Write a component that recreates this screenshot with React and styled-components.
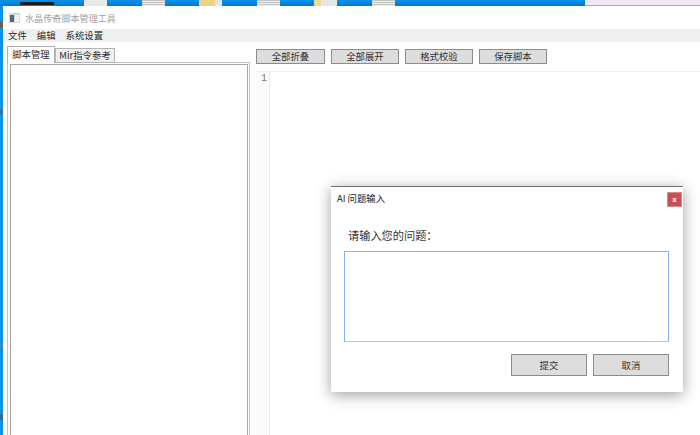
import styled, { createGlobalStyle } from 'styled-components';

const FONT = '"Noto Sans CJK SC", "Noto Sans", sans-serif';

const GlobalStyle = createGlobalStyle`
	html,
	body {
		margin: 0;
		padding: 0;
	}

	body {
		font-family: ${FONT};
	}
`;

const Screen = styled.div`
	position: relative;
	display: flex;
	flex-direction: column;
	width: 700px;
	height: 435px;
	overflow: hidden;
	background: #0a8ae0;
`;

const TaskStrip = styled.div`
	display: flex;
	flex: 0 0 6px;
	height: 6px;
	padding-left: 20px;
	gap: 30px;
	background: linear-gradient(#0a93e6, #0078d0);
`;

const BlackBar = styled.div`
	width: 34px;
	height: 3px;
	margin-top: 2px;
	background: #1c1c1c;
`;

const TileGroup = styled.div`
	display: flex;
	gap: 34.6px;
`;

const Tile = styled.div`
	width: 23px;
	height: 6px;
	background: ${({ $kind }) =>
		$kind === 'folder'
			? 'linear-gradient(90deg, #ecd27e 70%, #dfe6ee 70%)'
			: $kind === 'half'
				? 'linear-gradient(90deg, #f1d98f 30%, #e6e6e6 30%)'
				: $kind === 'lined'
					? 'repeating-linear-gradient(#c4c4c4 0, #c4c4c4 1px, #ececec 1px, #ececec 2px)'
					: '#e8e8e8'};
`;

const PinkCorner = styled.div`
	width: 115px;
	height: 5px;
	margin-left: auto;
	border-bottom: 1px solid #b0a8b0;
	background: #f3e8f2;
`;

const Body = styled.div`
	display: flex;
	flex: 1;
	min-height: 0;
`;

const DesktopEdge = styled.div`
	flex: 0 0 3px;
	background: linear-gradient(
		#0a93e8 16px,
		#7a5a50 16px,
		#7a5a50 22px,
		#0a93e8 22px,
		#0a93e8 104px,
		#4a6a80 104px,
		#4a6a80 108px,
		#0a93e8 108px,
		#0a93e8 338px,
		#4a88b0 338px,
		#4a88b0 341px,
		#0a93e8 341px,
		#0a93e8 408px,
		#3a6a88 408px,
		#3a6a88 414px,
		#0a93e8 414px
	);
`;

const Window = styled.div`
	display: flex;
	flex: 1;
	flex-direction: column;
	min-width: 0;
	background: #fff;
`;

const TitleBar = styled.div`
	display: flex;
	flex: 0 0 23px;
	align-items: center;
	gap: 5px;
	padding-left: 6px;
`;

const TitleText = styled.span`
	color: #a2a2a2;
	font-size: 9.1px;
	line-height: 12px;
`;

const MenuBar = styled.div`
	display: flex;
	flex: 0 0 13px;
	align-items: center;
	gap: 10px;
	padding-left: 5px;
	background: #f0f0f0;
`;

const MenuItem = styled.span`
	color: #2a2a2a;
	font-size: 9.4px;
	line-height: 13px;
`;

const Content = styled.div`
	display: flex;
	flex: 1;
	min-height: 0;
`;

const LeftPane = styled.div`
	display: flex;
	flex: 0 0 247px;
	flex-direction: column;
	box-sizing: border-box;
	padding: 4px 0 0 4px;
`;

const TabRow = styled.div`
	display: flex;
	align-items: flex-end;
	height: 17px;
	margin-bottom: -1px;
`;

const Tab = styled.div`
	position: relative;
	z-index: ${({ $active }) => ($active ? 1 : 0)};
	box-sizing: border-box;
	height: ${({ $active }) => ($active ? 17 : 15)}px;
	width: ${({ $width }) => $width}px;
	padding-top: ${({ $active }) => ($active ? 1 : 0)}px;
	border: 1px solid #b4b4b4;
	border-bottom: ${({ $active }) => ($active ? 0 : '1px solid #b4b4b4')};
	background: ${({ $active }) => ($active ? '#fff' : '#f0f0f0')};
	color: #2a2a2a;
	font-size: 9.4px;
	line-height: 13px;
	text-align: center;
`;

const TabPanel = styled.div`
	flex: 1;
	display: flex;
	box-sizing: border-box;
	border: 1px solid #c4c4c4;
	border-bottom: 0;
	padding: 1px 1px 0 2px;
`;

const ListBox = styled.div`
	flex: 1;
	border: 1px solid #a6a6a6;
	border-bottom: 0;
	background: #fff;
`;

const RightPane = styled.div`
	display: flex;
	flex: 1;
	flex-direction: column;
	min-width: 0;
	padding-left: 6px;
`;

const Toolbar = styled.div`
	display: flex;
	gap: 6px;
	padding-top: 7px;
`;

const ToolButton = styled.button`
	box-sizing: border-box;
	width: ${({ $width }) => $width}px;
	height: 15px;
	padding: 0;
	border: 1px solid #8c8c8c;
	background: #dddddd;
	color: #333;
	font-family: ${FONT};
	font-size: 9.4px;
	line-height: 13px;
`;

const Editor = styled.div`
	display: flex;
	flex: 1;
	margin-top: 7px;
	border-top: 1px solid #f0f0f0;
`;

const Gutter = styled.div`
	box-sizing: border-box;
	flex: 0 0 14px;
	padding: 1px 2px 0 0;
	border-right: 1px solid #eaeaea;
	background: #fbfbfb;
	color: #7a7a7a;
	font-family: "Liberation Mono", monospace;
	font-size: 10px;
	line-height: 12px;
	text-align: right;
`;

const Dialog = styled.div`
	position: absolute;
	left: 331px;
	top: 186px;
	display: flex;
	flex-direction: column;
	box-sizing: border-box;
	width: 352px;
	height: 206px;
	border-top: 1px solid #707070;
	background: #fff;
	box-shadow: 0 3px 14px rgba(0, 0, 0, 0.38);
`;

const DialogHeader = styled.div`
	display: flex;
	justify-content: space-between;
	padding: 5px 1px 0 6px;
`;

const DialogTitle = styled.span`
	color: #222;
	font-size: 9.4px;
	line-height: 13px;
`;

const CloseButton = styled.button`
	box-sizing: border-box;
	width: 15px;
	height: 15px;
	padding: 0;
	border: 1px solid #d98a8e;
	background: #c94f55;
	color: #fff;
	font-family: "Liberation Sans", sans-serif;
	font-size: 8px;
	font-weight: 700;
	line-height: 11px;
`;

const DialogBody = styled.div`
	display: flex;
	flex: 1;
	flex-direction: column;
	padding: 20px 14px 0 13px;
`;

const Prompt = styled.label`
	padding-left: 4px;
	color: #333;
	font-size: 11.2px;
	line-height: 16px;
`;

const Question = styled.textarea`
	display: block;
	box-sizing: border-box;
	width: 325px;
	height: 91px;
	margin-top: 8px;
	padding: 2px;
	border: 1px solid #7fb5ea;
	border-bottom-color: #a8cdf2;
	outline: none;
	resize: none;
`;

const DialogActions = styled.div`
	display: flex;
	justify-content: flex-end;
	gap: 6px;
	margin-top: 12px;
`;

const DialogButton = styled.button`
	box-sizing: border-box;
	width: 76px;
	height: 22px;
	padding: 0;
	border: 1px solid #8c8c8c;
	background: #dddddd;
	color: #333;
	font-family: ${FONT};
	font-size: 9.4px;
`;

const AppIcon = () => (
	<svg width="11" height="10" viewBox="0 0 11 10">
		<rect width="11" height="10" fill="#d4d8da" />
		<rect x="1" y="2" width="4" height="7" fill="#4d6f77" />
		<rect x="6" y="2" width="4" height="7" fill="#f2f4f4" />
	</svg>
);

const TILES = ['plain', 'lined', 'folder', 'lined', 'half', 'lined'];
const MENU = ['文件', '编辑', '系统设置'];
const TOOLS = [
	{ label: '全部折叠', width: 69 },
	{ label: '全部展开', width: 68 },
	{ label: '格式校验', width: 68 },
	{ label: '保存脚本', width: 68 },
];

export default function App() {
	return (
		<Screen>
			<GlobalStyle />
			<TaskStrip>
				<BlackBar />
				<TileGroup>
					{TILES.map((kind, index) => (
						<Tile key={index} $kind={kind} />
					))}
				</TileGroup>
				<PinkCorner />
			</TaskStrip>
			<Body>
				<DesktopEdge />
				<Window>
					<TitleBar>
						<AppIcon />
						<TitleText>水晶传奇脚本管理工具</TitleText>
					</TitleBar>
					<MenuBar>
						{MENU.map((item) => (
							<MenuItem key={item}>{item}</MenuItem>
						))}
					</MenuBar>
					<Content>
						<LeftPane>
							<TabRow>
								<Tab $active $width={48}>
									脚本管理
								</Tab>
								<Tab $width={60}>Mir指令参考</Tab>
							</TabRow>
							<TabPanel>
								<ListBox />
							</TabPanel>
						</LeftPane>
						<RightPane>
							<Toolbar>
								{TOOLS.map(({ label, width }) => (
									<ToolButton key={label} $width={width}>
										{label}
									</ToolButton>
								))}
							</Toolbar>
							<Editor>
								<Gutter>1</Gutter>
							</Editor>
						</RightPane>
					</Content>
				</Window>
			</Body>
			<Dialog>
				<DialogHeader>
					<DialogTitle>AI 问题输入</DialogTitle>
					<CloseButton>x</CloseButton>
				</DialogHeader>
				<DialogBody>
					<Prompt>请输入您的问题：</Prompt>
					<Question />
					<DialogActions>
						<DialogButton>提交</DialogButton>
						<DialogButton>取消</DialogButton>
					</DialogActions>
				</DialogBody>
			</Dialog>
		</Screen>
	);
}
